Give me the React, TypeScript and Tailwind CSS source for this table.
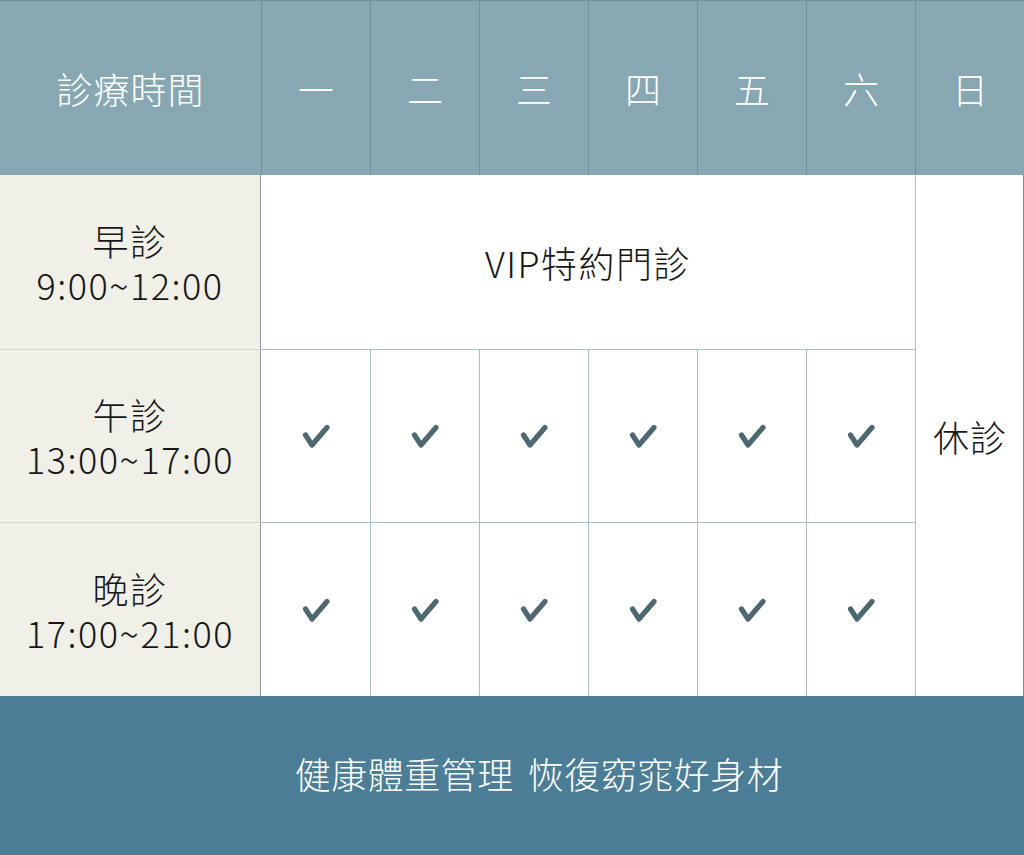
import React from "react";

const font = { fontFamily: '"Noto Sans CJK TC", "Noto Sans", sans-serif' };

function Check() {
  return (
    <svg width="28" height="26" viewBox="0 0 28 26" fill="none">
      <path d="M3.5 12 L10 22 L25 4.5" stroke="#4d6871" strokeWidth="5.2" strokeLinecap="round" strokeLinejoin="round" />
    </svg>
  );
}

const days = ["一", "二", "三", "四", "五", "六", "日"];
const rows = [
  { name: "午診", time: "13:00~17:00" },
  { name: "晚診", time: "17:00~21:00" },
];

export default function App() {
  return (
    <div className="w-[1024px] h-[855px] flex flex-col bg-white font-light" style={font}>
      <div className="grid grid-cols-[261px_repeat(7,109px)] grid-rows-[174px_174px_173px_174px] border-t border-[#6f8f9d] border-r border-r-[#6f8f9d]">
        <div className="bg-[#87a8b3] flex items-center justify-center text-white text-[36px] tracking-[1px]">
          診療時間
        </div>
        {days.map((d) => (
          <div key={d} className="bg-[#87a8b3] border-l border-[#6f8f9d] flex items-center justify-center text-white text-[36px]">
            {d}
          </div>
        ))}

        <div className="bg-[#f0f0e9] border-r border-[#8f9a9e] flex items-center justify-center text-center text-[#161616] text-[36px] leading-[44px] tracking-[1.5px]">
          <p>
            早診
            <br />
            9:00~12:00
          </p>
        </div>
        <div className="col-span-6 flex items-center justify-center text-[#161616] text-[36px] tracking-[1.5px]">
          VIP特約門診
        </div>
        <div className="row-span-3 border-l border-[#a7bec7] flex items-center justify-center text-[#161616] text-[36px] tracking-[1px]">
          休診
        </div>

        {rows.map((r) => (
          <React.Fragment key={r.name}>
            <div className="bg-[#f0f0e9] border-r border-[#8f9a9e] border-t border-t-[#d3d6d2] flex items-center justify-center text-center text-[#161616] text-[36px] leading-[44px] tracking-[1.5px]">
              <p>
                {r.name}
                <br />
                {r.time}
              </p>
            </div>
            {[0, 1, 2, 3, 4, 5].map((i) => (
              <div
                key={i}
                className={`border-t border-[#a7bec7] flex items-center justify-center ${i > 0 ? "border-l" : ""}`}
              >
                <Check />
              </div>
            ))}
          </React.Fragment>
        ))}
      </div>
      <div className="flex-1 bg-[#4b7d96] flex items-center justify-center gap-[14px] pb-[5px] pl-[54px] text-white text-[36px] tracking-[0.5px]">
        <span>健康體重管理</span>
        <span>恢復窈窕好身材</span>
      </div>
    </div>
  );
}
